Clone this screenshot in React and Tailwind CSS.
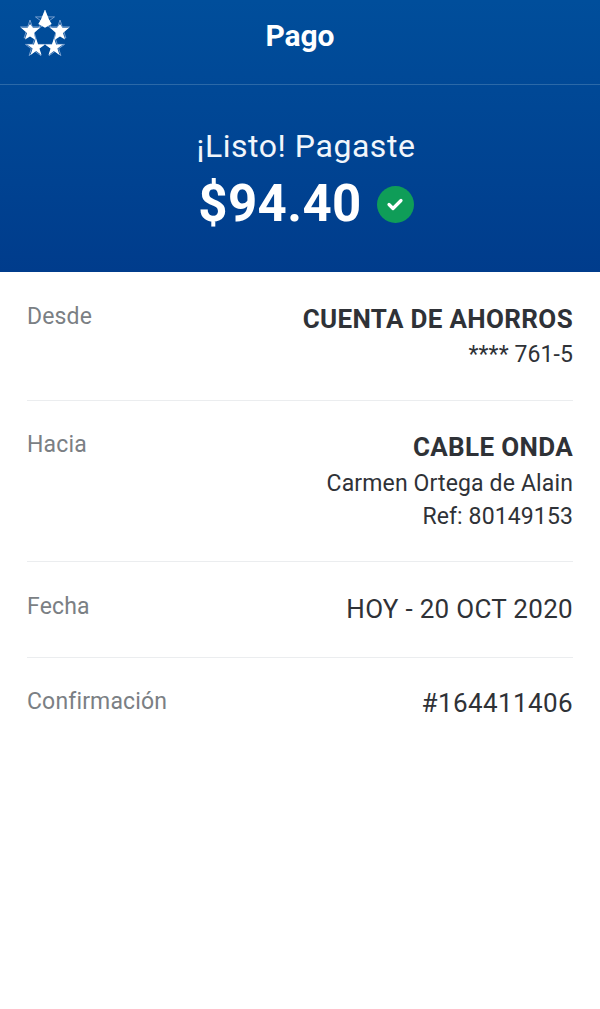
function Logo() {
  const star = (cx, cy, r) => {
    const pts = [];
    for (let i = 0; i < 10; i++) {
      const a = -Math.PI / 2 + (i * Math.PI) / 5;
      const rr = i % 2 === 0 ? r : r * 0.382;
      pts.push(`${(cx + rr * Math.cos(a)).toFixed(2)},${(cy + rr * Math.sin(a)).toFixed(2)}`);
    }
    return pts.join(" ");
  };
  return (
    <svg width="50" height="50" viewBox="20 8 50 50" className="absolute left-[20px] top-[8px]">
      {[[45, 20], [30, 30], [60, 30], [35, 47.5], [55, 47.5]].map(([x, y], i) => (
        <polygon key={"o" + i} points={star(x, y, 10)} fill="none" stroke="#8fb0da" strokeWidth="0.8" />
      ))}
      <polygon points="45,10 49.3,20 51.7,24 45,27.7 38.3,24 40.7,20" fill="#fff" />
      <polygon points="21,27.7 27.5,27.7 30,24 33,27.7 40,27.7 34,33 35.5,40 30,36.5 25,39.5 27,33" fill="#fff" />
      <polygon points="69,27.7 62.5,27.7 60,24 57,27.7 50,27.7 56,33 54.5,40 60,36.5 65,39.5 63,33" fill="#fff" />
      <polygon points={star(36, 47.5, 9.4)} fill="#fff" />
      <polygon points={star(54, 47.5, 9.4)} fill="#fff" />
    </svg>
  );
}

function Row({ label, labelClass, className, children }) {
  return (
    <div className={`flex justify-between border-b border-[#ebedef] ${className}`}>
      <div className={`text-[23px] leading-[28px] tracking-[0.15px] text-[#7b7f84] ${labelClass}`}>{label}</div>
      <div className="text-right text-[#2f3237]">{children}</div>
    </div>
  );
}

export default function App() {
  return (
    <div className="h-[1009px] w-[600px] overflow-hidden bg-white" style={{ fontFamily: "Roboto, sans-serif" }}>
      <div className="bg-gradient-to-b from-[#004e9b] to-[#003c8c]">
        <div className="relative flex h-[85px] items-start justify-center border-b border-[#2b69a8]">
          <Logo />
          <div className="pt-[18px] text-[30px] font-bold leading-[36px] tracking-[-0.1px] text-white">Pago</div>
        </div>
        <div className="flex h-[187px] flex-col items-center pl-[12px] pt-[41px]">
          <div className="text-[32px] leading-[40px] tracking-[0.55px] text-[#f2f6fb]">¡Listo! Pagaste</div>
          <div className="mt-[8px] flex items-center gap-[15px]">
            <div className="text-[51px] font-bold leading-[60px] tracking-[0.4px] text-white">$94.40</div>
            <div className="flex h-[37px] w-[37px] items-center justify-center rounded-full bg-[#0f9d58]">
              <svg width="20" height="16" viewBox="0 0 20 16" fill="none" stroke="#fff" strokeWidth="3.2" strokeLinecap="round" strokeLinejoin="round">
                <path d="M4 8.5l4 4 8-8" />
              </svg>
            </div>
          </div>
        </div>
      </div>
      <div className="px-[27px]">
        <Row label="Desde" labelClass="mt-[1px]" className="h-[129px] pt-[30px]">
          <div className="text-[26px] font-bold leading-[34px] tracking-[0.35px]">CUENTA DE AHORROS</div>
          <div className="mt-[2px] text-[23px] leading-[34px] tracking-[0.1px]">**** 761-5</div>
        </Row>
        <Row label="Hacia" labelClass="mt-[1px]" className="h-[161px] pt-[29px]">
          <div className="text-[26px] font-bold leading-[34px] tracking-[0.35px]">CABLE ONDA</div>
          <div className="mt-[3px] text-[23px] leading-[33px] tracking-[0.14px]">Carmen Ortega de Alain</div>
          <div className="text-[23px] leading-[33px] tracking-[0.12px]">Ref: 80149153</div>
        </Row>
        <Row label="Fecha" labelClass="mt-[1px]" className="h-[96px] pt-[30px]">
          <div className="text-[26px] leading-[34px] tracking-[0.3px]">HOY - 20 OCT 2020</div>
        </Row>
        <div className="flex justify-between pt-[28px]">
          <div className="mt-[2px] text-[23px] leading-[28px] tracking-[0.15px] text-[#7b7f84]">Confirmación</div>
          <div className="text-[26px] leading-[34px] tracking-[0.4px] text-[#2f3237]">#164411406</div>
        </div>
      </div>
    </div>
  );
}
